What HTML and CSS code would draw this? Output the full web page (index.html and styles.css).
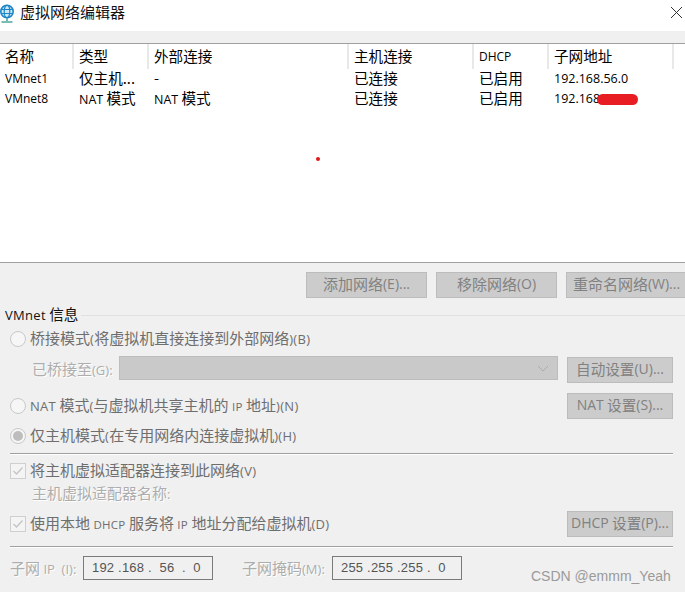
FILE: index.html
```html
<!DOCTYPE html>
<html lang="zh-CN">
<head>
    <meta charset="UTF-8">
    <title>虚拟网络编辑器</title>
    <link rel="stylesheet" href="styles.css">
</head>
<body>
<div class="window">

    <!-- Title bar -->
    <div class="titlebar">
        <svg class="app-icon" width="16" height="20" viewBox="0 0 16 20" fill="none">
            <circle cx="7" cy="7.5" r="6.2" fill="#cfe9f7" stroke="#1c86c8" stroke-width="1.6"/>
            <ellipse cx="7" cy="7.5" rx="2.8" ry="6.2" stroke="#1c86c8" stroke-width="1.2"/>
            <path d="M1 5.5h12M1 9.5h12" stroke="#1c86c8" stroke-width="1.2"/>
            <path d="M7 14v3M1.5 18h11" stroke="#4ea89c" stroke-width="1.6"/>
        </svg>
        <span class="title">虚拟网络编辑器</span>
        <svg class="close" width="13" height="13" viewBox="0 0 13 13" fill="none">
            <path d="M1 1l11 11M12 1L1 12" stroke="#333" stroke-width="1"/>
        </svg>
    </div>
    <div class="band"></div>

    <!-- Network list -->
    <div class="list">
        <div class="grid head">
            <div>名称</div>
            <div>类型</div>
            <div>外部连接</div>
            <div>主机连接</div>
            <div class="lat">DHCP</div>
            <div>子网地址</div>
        </div>
        <div class="grid row">
            <div class="lat">VMnet1</div>
            <div>仅主机...</div>
            <div>-</div>
            <div>已连接</div>
            <div>已启用</div>
            <div class="lat">192.168.56.0</div>
        </div>
        <div class="grid row">
            <div class="lat">VMnet8</div>
            <div><span class="lat">NAT</span> 模式</div>
            <div><span class="lat">NAT</span> 模式</div>
            <div>已连接</div>
            <div>已启用</div>
            <div class="lat">192.168</div>
        </div>
        <div class="scribble"></div>
        <div class="dot"></div>
    </div>

    <!-- Lower panel -->
    <div class="panel">
        <div class="net-buttons">
            <div class="btn wide">添加网络<span class="lat">(E)...</span></div>
            <div class="btn wide">移除网络<span class="lat">(O)</span></div>
            <div class="btn wide">重命名网络<span class="lat">(W)...</span></div>
        </div>

        <div class="legend">
            <span class="legend-text lbl"><span class="lat">VMnet</span> 信息</span>
            <span class="legend-line"></span>
        </div>

        <div class="options">
            <div class="opt first">
                <span class="radio"></span>
                <span class="lbl">桥接模式<span class="lat">(</span>将虚拟机直接连接到外部网络<span class="lat">)(B)</span></span>
            </div>

            <div class="opt bridged">
                <span class="faint">已桥接至<span class="lat">(G):</span></span>
                <div class="select">
                    <svg width="12" height="7" viewBox="0 0 12 7" fill="none">
                        <path d="M1 1l5 5 5-5" stroke="#aaa" stroke-width="1"/>
                    </svg>
                </div>
                <div class="btn side">自动设置<span class="lat">(U)...</span></div>
            </div>

            <div class="opt nat">
                <span class="radio"></span>
                <span class="lbl"><span class="lat">NAT</span> 模式<span class="lat">(</span>与虚拟机共享主机的 <span class="lat tiny">IP</span> 地址<span class="lat">)(N)</span></span>
                <div class="btn side push"><span class="lat">NAT</span> 设置<span class="lat">(S)...</span></div>
            </div>

            <div class="opt host">
                <span class="radio on"></span>
                <span class="lbl">仅主机模式<span class="lat">(</span>在专用网络内连接虚拟机<span class="lat">)(H)</span></span>
            </div>

            <div class="sep sep-a"></div>

            <div class="opt adapter">
                <span class="check">
                    <svg width="12" height="10" viewBox="0 0 12 10" fill="none">
                        <path d="M1.5 5l3 3 6-6.5" stroke="#c4c4c4" stroke-width="1.3"/>
                    </svg>
                </span>
                <span class="lbl">将主机虚拟适配器连接到此网络<span class="lat">(V)</span></span>
            </div>

            <div class="opt adapter-name">
                <span class="faint lbl">主机虚拟适配器名称<span class="lat">:</span></span>
            </div>

            <div class="opt dhcp">
                <span class="check">
                    <svg width="12" height="10" viewBox="0 0 12 10" fill="none">
                        <path d="M1.5 5l3 3 6-6.5" stroke="#c4c4c4" stroke-width="1.3"/>
                    </svg>
                </span>
                <span class="lbl">使用本地 <span class="lat tiny">DHCP</span> 服务将 <span class="lat tiny">IP</span> 地址分配给虚拟机<span class="lat">(D)</span></span>
                <div class="btn side push"><span class="lat">DHCP</span> 设置<span class="lat">(P)...</span></div>
            </div>

            <div class="sep sep-b"></div>

            <div class="subnet">
                <span class="faint sub-label">子网 <span class="lat">IP  (I):</span></span>
                <div class="ip">192 .168 .  56  .  0</div>
                <span class="faint mask-label">子网掩码<span class="lat">(M):</span></span>
                <div class="ip">255 .255 .255 .  0</div>
            </div>
        </div>

        <div class="watermark">CSDN @emmm_Yeah</div>
    </div>

</div>
</body>
</html>
```

FILE: styles.css
```css
html, body {
    margin: 0;
    padding: 0;
}
body {
    font-family: "Noto Sans CJK SC", "Noto Sans", sans-serif;
    font-size: 15px;
    color: #000;
    background-color: #f0f0f0;
}
.window {
    width: 685px;
    height: 592px;
    overflow: hidden;
    position: relative;
}
.lat {
    font-family: "Open Sans", "Noto Sans", sans-serif;
    font-size: 13px;
}
.tiny {
    font-size: 11.5px;
}

/* title bar */
.titlebar {
    height: 31px;
    background-color: #fff;
    display: flex;
    align-items: center;
}
.app-icon {
    margin-right: 4px;
    margin-top: -4px;
}
.title {
    font-size: 15px;
    color: #111;
    line-height: 24px;
    margin-top: -8px;
}
.close {
    margin-left: auto;
    margin-right: 2px;
    margin-top: -7px;
}
.band {
    height: 12px;
    background-color: #f0f0f0;
    border-bottom: 1px solid #a0a0a0;
}

/* list */
.list {
    height: 218px;
    background-color: #fff;
    border-bottom: 1px solid #a0a0a0;
    position: relative;
}
.grid {
    display: grid;
    grid-template-columns: 73px 75px 200px 125px 75px 125px;
}
.grid > div {
    padding-left: 6px;
    white-space: nowrap;
}
.grid > div:first-child {
    padding-left: 5px;
}
.head {
    height: 25px;
    line-height: 23px;
}
.head > div {
    border-right: 2px solid #e8e8e8;
    margin-right: -1px;
    font-size: 14.6px;
}
.head .lat {
    font-size: 12px;
    line-height: 25px;
}
.row {
    height: 20px;
    line-height: 18px;
    font-size: 14.6px;
}
.row .lat {
    font-size: 12.5px;
}
.row > .lat {
    line-height: 20px;
}
.row > .lat:first-child {
    font-size: 12px;
}
.scribble {
    position: absolute;
    left: 597px;
    top: 50px;
    width: 41px;
    height: 11px;
    border-radius: 6px;
    background-color: #e81c23;
}
.dot {
    position: absolute;
    left: 316px;
    top: 113px;
    width: 4px;
    height: 4px;
    border-radius: 50%;
    background-color: #e01a1a;
}

/* panel */
.panel {
    color: #6e6e6e;
}
.lbl {
    margin-bottom: 4px;
}
.lbl .lat {
    letter-spacing: 0.3px;
}
.btn {
    box-sizing: border-box;
    height: 26px;
    padding-bottom: 3px;
    background-color: #cccccc;
    border: 1px solid #bcbcbc;
    color: #818181;
    display: flex;
    align-items: center;
    justify-content: center;
    white-space: pre;
    flex-shrink: 0;
}
.btn .lat {
    font-size: 14px;
}
.net-buttons {
    display: flex;
    gap: 9px;
    margin: 9px 0 0 306px;
}
.btn.wide {
    width: 121px;
}
.btn.side {
    width: 106px;
    font-size: 14.6px;
}
.push {
    margin-left: auto;
}
.legend {
    display: flex;
    align-items: center;
    height: 18px;
    margin-top: 8px;
    padding-left: 5px;
}
.legend-text {
    color: #111;
    margin-right: 3px;
    font-size: 14.6px;
}
.legend-line {
    flex: 1;
    height: 1px;
    background-color: #e0e0e0;
}
.options {
    padding: 0 12px 0 10px;
}
.opt {
    display: flex;
    align-items: center;
    white-space: pre;
}
.radio {
    box-sizing: border-box;
    width: 16px;
    height: 16px;
    border-radius: 50%;
    border: 1px solid #c8c8c8;
    background-color: #f6f6f6;
    margin-right: 4px;
    flex-shrink: 0;
    position: relative;
}
.radio.on::after {
    content: "";
    position: absolute;
    left: 2px;
    top: 2px;
    width: 10px;
    height: 10px;
    border-radius: 50%;
    background-color: #bdbdbd;
}
.check {
    box-sizing: border-box;
    width: 16px;
    height: 16px;
    border: 1px solid #cfcfcf;
    background-color: #f4f4f4;
    margin-right: 4px;
    flex-shrink: 0;
    display: flex;
    align-items: center;
    justify-content: center;
}
.faint {
    color: #adadad;
    text-shadow: 1px 1px 0 #fff;
}
.first {
    height: 18px;
    margin-top: 6px;
}
.bridged {
    height: 27px;
    margin-top: 8px;
    padding-left: 22px;
    align-items: flex-start;
}
.bridged .faint {
    width: 87px;
    line-height: 25px;
}
.select {
    box-sizing: border-box;
    width: 439px;
    height: 24px;
    background-color: #c9c9c9;
    border: 1px solid #bdbdbd;
    display: flex;
    align-items: center;
    justify-content: flex-end;
    padding-right: 8px;
    margin-right: 9px;
}
.bridged .btn {
    margin-top: 1px;
}
.nat {
    height: 26px;
    margin-top: 10px;
}
.host {
    height: 18px;
    margin-top: 8px;
}
.sep {
    height: 1px;
    background-color: #a0a0a0;
    border-bottom: 1px solid #fff;
}
.sep-a {
    margin-top: 8px;
}
.adapter {
    height: 18px;
    margin-top: 7px;
}
.adapter-name {
    height: 18px;
    margin-top: 5px;
    padding-left: 22px;
}
.dhcp {
    height: 26px;
    margin-top: 8px;
}
.sep-b {
    margin-top: 9px;
}
.subnet {
    display: flex;
    align-items: center;
    height: 24px;
    margin-top: 8px;
    white-space: pre;
}
.sub-label {
    width: 73px;
    margin-bottom: 2px;
}
.mask-label {
    width: 90px;
    margin-left: 29px;
    margin-bottom: 2px;
}
.ip {
    box-sizing: border-box;
    width: 130px;
    height: 24px;
    line-height: 22px;
    border: 1px solid #7a7a7a;
    background-color: #f0f0f0;
    color: #555;
    font-family: "Liberation Sans", sans-serif;
    font-size: 13px;
    letter-spacing: 0.2px;
    padding-left: 8px;
    white-space: pre;
}
.watermark {
    position: absolute;
    left: 531px;
    top: 566px;
    color: #9a9a9a;
    font-family: "Liberation Sans", Arial, sans-serif;
    font-size: 14px;
    line-height: 20px;
    white-space: nowrap;
}
```
